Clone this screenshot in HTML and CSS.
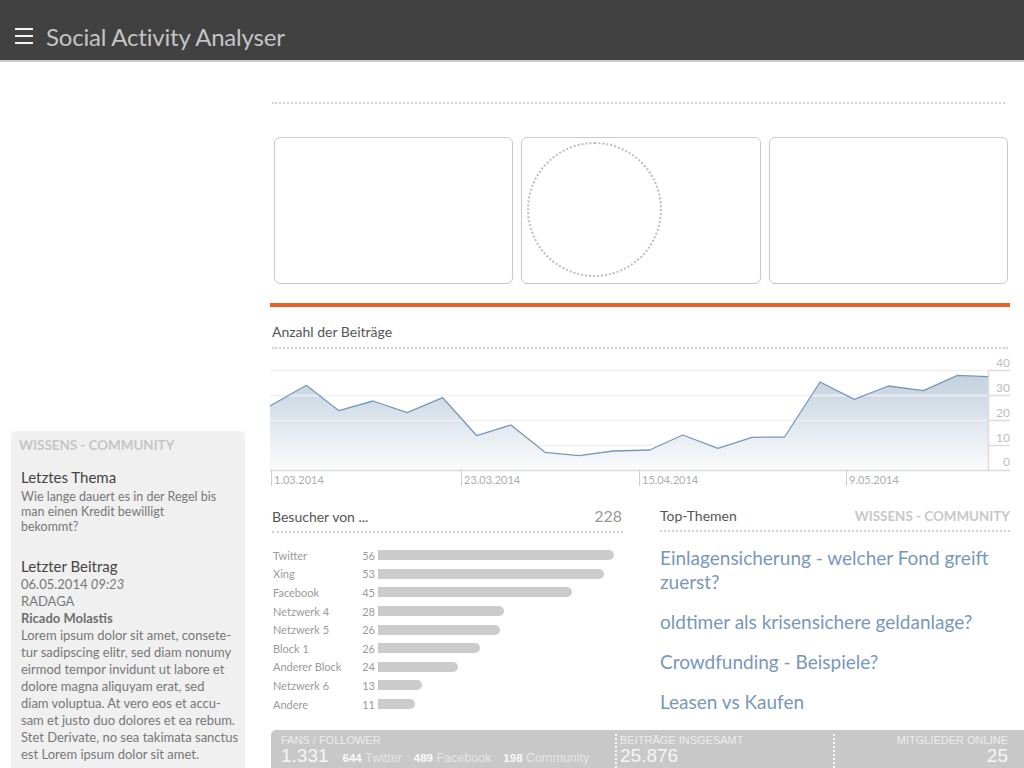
FILE: index.html
```html
<!DOCTYPE html>
<html lang="de">
<head>
<meta charset="utf-8">
<title>Social Activity Analyser</title>
<link rel="stylesheet" href="styles.css">
</head>
<body>
<header class="topbar">
  <svg class="menu-icon" width="18" height="16" viewBox="0 0 18 16" aria-hidden="true">
    <rect x="0" y="0" width="18" height="2" fill="#f2f2f2"/>
    <rect x="0" y="7" width="18" height="2" fill="#f2f2f2"/>
    <rect x="0" y="14" width="18" height="2" fill="#f2f2f2"/>
  </svg>
  <h1 class="app-title">Social Activity Analyser</h1>
</header>
<div class="layout">
  <aside class="sidebar">
    <section class="community-box">
      <h2 class="box-title">WISSENS - COMMUNITY</h2>
      <h3 class="box-sub">Letztes Thema</h3>
      <p class="box-text">Wie lange dauert es in der Regel bis<br>man einen Kredit bewilligt<br>bekommt?</p>
      <h3 class="box-sub box-sub-second">Letzter Beitrag</h3>
      <p class="post-text">06.05.2014 <em>09:23</em><br>RADAGA<br><strong>Ricado Molastis</strong><br>Lorem ipsum dolor sit amet, consete-<br>tur sadipscing elitr, sed diam nonumy<br>eirmod tempor invidunt ut labore et<br>dolore magna aliquyam erat, sed<br>diam voluptua. At vero eos et accu-<br>sam et justo duo dolores et ea rebum.<br>Stet Derivate, no sea takimata sanctus<br>est Lorem ipsum dolor sit amet.</p>
    </section>
  </aside>
  <main class="content">
    <div class="dotted-rule top-rule"></div>
    <div class="cards">
      <div class="card"></div>
      <div class="card"><div class="ring"></div></div>
      <div class="card"></div>
    </div>
    <div class="accent-rule"></div>
    <section class="chart-section">
      <h2 class="section-title chart-title">Anzahl der Beiträge</h2>
      <div class="dotted-rule chart-rule"></div>
      <svg class="chart" width="740" height="135" viewBox="0 0 740 135">
        <defs>
          <linearGradient id="areaFill" x1="0" y1="0" x2="0" y2="1">
            <stop offset="0" stop-color="#c3d1df"/>
            <stop offset="1" stop-color="#fbfcfd"/>
          </linearGradient>
        </defs>
        <path d="M0,115 L0,51 L36.3,30.3 L68.9,55.7 L103,46 L137.1,57.7 L172.7,42.7 L206.8,80.7 L240.9,70 L275,97.3 L309,100.7 L343.1,96 L379.7,95 L412.8,80 L447.9,93.3 L482,82.3 L514.6,82 L550.1,27 L584.3,44.3 L618.3,31 L653.4,35.7 L687.5,20.3 L718,21.7 L718,115 Z" fill="url(#areaFill)"/>
        <g stroke="#f0f0f0" stroke-opacity="0.8" stroke-width="2">
          <line x1="0" y1="15.5" x2="718" y2="15.5"/>
          <line x1="0" y1="40.5" x2="718" y2="40.5"/>
          <line x1="0" y1="65.5" x2="718" y2="65.5"/>
          <line x1="0" y1="90.5" x2="718" y2="90.5"/>
        </g>
        <g stroke="#dcdcdc" stroke-width="1.5">
          <line x1="718" y1="15.5" x2="740" y2="15.5"/>
          <line x1="718" y1="40.5" x2="740" y2="40.5"/>
          <line x1="718" y1="65.5" x2="740" y2="65.5"/>
          <line x1="718" y1="90.5" x2="740" y2="90.5"/>
          <line x1="0" y1="115.5" x2="740" y2="115.5"/>
          <line x1="718.5" y1="15" x2="718.5" y2="115.5"/>
        </g>
        <polyline points="0,51 36.3,30.3 68.9,55.7 103,46 137.1,57.7 172.7,42.7 206.8,80.7 240.9,70 275,97.3 309,100.7 343.1,96 379.7,95 412.8,80 447.9,93.3 482,82.3 514.6,82 550.1,27 584.3,44.3 618.3,31 653.4,35.7 687.5,20.3 718,21.7" fill="none" stroke="#7898bb" stroke-width="1.3" stroke-linejoin="round"/>
        <g class="axis-y" text-anchor="end">
          <text x="740" y="12">40</text>
          <text x="740" y="37">30</text>
          <text x="740" y="62">20</text>
          <text x="740" y="87">10</text>
          <text x="740" y="111">0</text>
        </g>
        <g stroke="#cfcfcf" stroke-width="1">
          <line x1="1.5" y1="115" x2="1.5" y2="131"/>
          <line x1="191.5" y1="115" x2="191.5" y2="131"/>
          <line x1="369.5" y1="115" x2="369.5" y2="131"/>
          <line x1="576.5" y1="115" x2="576.5" y2="131"/>
        </g>
        <g class="axis-x">
          <text x="4" y="129">1.03.2014</text>
          <text x="194" y="129">23.03.2014</text>
          <text x="372" y="129">15.04.2014</text>
          <text x="579" y="129">9.05.2014</text>
        </g>
      </svg>
    </section>
    <div class="lower">
      <section class="visitors">
        <div class="section-head">
          <span class="section-title">Besucher von ...</span>
          <span class="head-total">228</span>
        </div>
        <ul class="bars">
          <li class="bar-row"><span class="bar-label">Twitter</span><span class="bar-num">56</span><span class="bar" style="width:236px"></span></li>
          <li class="bar-row"><span class="bar-label">Xing</span><span class="bar-num">53</span><span class="bar" style="width:226px"></span></li>
          <li class="bar-row"><span class="bar-label">Facebook</span><span class="bar-num">45</span><span class="bar" style="width:194px"></span></li>
          <li class="bar-row"><span class="bar-label">Netzwerk 4</span><span class="bar-num">28</span><span class="bar" style="width:126px"></span></li>
          <li class="bar-row"><span class="bar-label">Netzwerk 5</span><span class="bar-num">26</span><span class="bar" style="width:122px"></span></li>
          <li class="bar-row"><span class="bar-label">Block 1</span><span class="bar-num">26</span><span class="bar" style="width:102px"></span></li>
          <li class="bar-row"><span class="bar-label">Anderer Block</span><span class="bar-num">24</span><span class="bar" style="width:80px"></span></li>
          <li class="bar-row"><span class="bar-label">Netzwerk 6</span><span class="bar-num">13</span><span class="bar" style="width:44px"></span></li>
          <li class="bar-row"><span class="bar-label">Andere</span><span class="bar-num">11</span><span class="bar" style="width:37px"></span></li>
        </ul>
      </section>
      <section class="topics">
        <div class="section-head">
          <span class="section-title">Top-Themen</span>
          <span class="head-tag">WISSENS - COMMUNITY</span>
        </div>
        <ul class="topic-list">
          <li><a class="topic-link">Einlagensicherung - welcher Fond greift zuerst?</a></li>
          <li><a class="topic-link">oldtimer als krisensichere geldanlage?</a></li>
          <li><a class="topic-link">Crowdfunding - Beispiele?</a></li>
          <li><a class="topic-link">Leasen vs Kaufen</a></li>
        </ul>
      </section>
    </div>
    <div class="stats">
      <div class="stat stat-fans">
        <div class="stat-label">FANS / FOLLOWER</div>
        <div class="stat-value">1.331<span class="stat-sub"><b>644</b> Twitter</span><span class="stat-sub"><b>489</b> Facebook</span><span class="stat-sub"><b>198</b> Community</span></div>
      </div>
      <div class="stat stat-posts">
        <div class="stat-label">BEITRÄGE INSGESAMT</div>
        <div class="stat-value">25.876</div>
      </div>
      <div class="stat stat-online">
        <div class="stat-label">MITGLIEDER ONLINE</div>
        <div class="stat-value">25</div>
      </div>
    </div>
  </main>
</div>
</body>
</html>
```
FILE: styles.css
```css
* { box-sizing: border-box; margin: 0; padding: 0; }
html, body { width: 1024px; height: 768px; overflow: hidden; }
body { font-family: Lato, "Open Sans", sans-serif; background: #fff; color: #555; }
ul { list-style: none; }

/* header */
.topbar {
  height: 62px;
  background: #414141;
  border-bottom: 2px solid #cbcbcb;
  display: flex;
  align-items: center;
  padding: 12px 0 0 15px;
}
.menu-icon { display: block; margin-right: 13px; }
.app-title { font-weight: 400; font-size: 24px; color: #c4c4c4; letter-spacing: -0.2px; }

.layout { display: flex; height: 706px; }

/* sidebar */
.sidebar { width: 270px; flex: none; padding: 369px 0 0 11px; }
.community-box {
  width: 234px;
  height: 100%;
  background: #f0f0f0;
  border-radius: 5px 5px 0 0;
  padding: 6px 6px 0 8px;
}
.box-title { font-size: 13.4px; line-height: 16px; font-weight: 700; color: #c6c6c6; }
.box-sub { font-size: 15px; line-height: 18px; font-weight: 400; color: #444; margin: 15px 0 0 2px; }
.box-sub-second { margin-top: 23px; }
.box-text { font-size: 12.5px; line-height: 15px; color: #777; margin: 3px 0 0 2px; white-space: nowrap; }
.post-text { font-size: 13px; line-height: 17px; color: #777; margin: 1px 0 0 2px; white-space: nowrap; }
.post-text em { font-style: italic; }
.post-text strong { font-weight: 700; color: #6f6f6f; }

/* main */
.content { width: 754px; flex: none; padding-top: 40px; }
.dotted-rule { border-top: 2px dotted #d2d2d2; }
.top-rule { margin: 0 19px 0 2px; }
.cards {
  display: grid;
  grid-template-columns: repeat(3, 1fr);
  gap: 8px;
  height: 147px;
  margin: 33px 16px 0 4px;
}
.card { border: 1px solid #c9c9c9; border-radius: 6px; padding: 4px 5px; }
.ring { width: 135px; height: 135px; border: 2px dotted #bdbdbd; border-radius: 50%; }
.accent-rule { height: 4px; background: #e2632b; margin: 19px 14px 0 0; }

.section-title { font-size: 14px; line-height: 18px; font-weight: 400; color: #555; }
.chart-title { margin: 16px 0 0 2px; }
.chart-rule { margin: 6px 16px 0 2px; }
.chart { display: block; margin-top: 6px; }
.axis-y text { font-family: Lato, sans-serif; font-size: 12px; fill: #bdbdbd; }
.axis-x text { font-family: Lato, sans-serif; font-size: 11px; fill: #adadad; }

.lower {
  display: grid;
  grid-template-columns: 351px 350px;
  column-gap: 37px;
  height: 240px;
  padding: 17px 0 0 2px;
}
.section-head {
  display: flex;
  justify-content: space-between;
  align-items: baseline;
  line-height: 18px;
  padding-bottom: 5px;
  border-bottom: 2px dotted #d2d2d2;
}
.head-total { font-size: 16px; color: #999; padding-right: 1px; }
.head-tag { font-size: 13.4px; font-weight: 700; color: #c8c8c8; }

.bars { margin-top: 13px; }
.bar-row { display: flex; align-items: center; height: 18.6px; font-size: 11px; color: #9a9a9a; }
.bar-label { width: 88px; padding-left: 1px; }
.bar-num { width: 15px; text-align: right; margin-right: 3px; }
.bar { height: 10px; background: #cccccc; border-radius: 0 5px 5px 0; }

.topic-list { margin-top: 14px; display: flex; flex-direction: column; gap: 16px; }
.topic-link { font-size: 19px; line-height: 24px; color: #7898bb; text-decoration: none; }

/* stats */
.stats {
  display: grid;
  grid-template-columns: 344px 218px 1fr;
  height: 38px;
  margin-left: 1px;
  background: #c8c8c8;
  border-radius: 5px 0 0 0;
  font-family: "Liberation Sans", Arial, sans-serif;
  color: #efefef;
}
.stat { padding-top: 4px; }
.stat-fans { padding-left: 10px; }
.stat-posts, .stat-online { border-left: 2px dotted rgba(255,255,255,0.85); margin-top: 4px; padding-top: 0; }
.stat-posts { padding-left: 3px; }
.stat-online { text-align: right; padding-right: 16px; }
.stat-label { font-size: 11px; line-height: 12px; color: #ececec; }
.stat-value { font-size: 19px; line-height: 20px; color: #f6f6f6; white-space: nowrap; }
.stat-sub { font-size: 12.5px; color: #e6e6e6; margin-left: 12px; }
.stat-sub:first-child { margin-left: 14px; }
.stat-sub b { font-size: 11.5px; font-weight: 700; color: #fafafa; }
```
